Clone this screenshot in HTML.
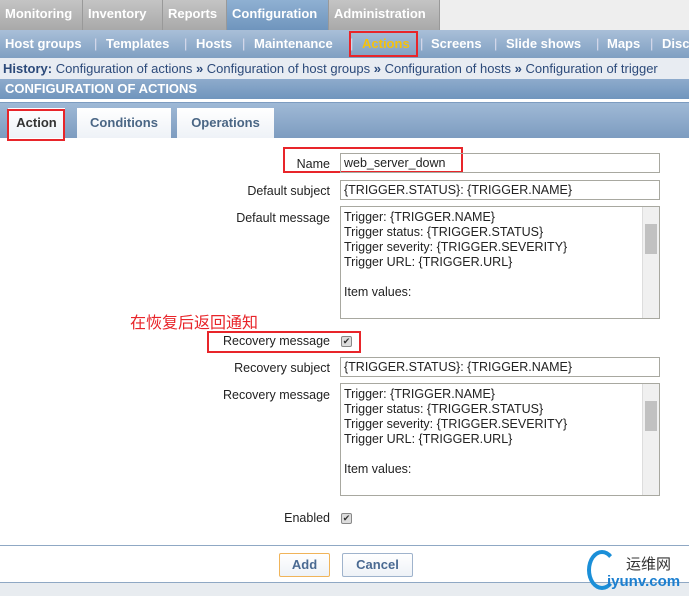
<!DOCTYPE html>
<html><head><meta charset="utf-8"><style>
*{box-sizing:border-box;margin:0;padding:0}
body{width:689px;height:596px;overflow:hidden;background:#fff;font-family:"Liberation Sans","DejaVu Sans",sans-serif;position:relative;font-size:12px;color:#222}
.a{position:absolute}
.top{left:0;top:0;width:689px;height:30px;background:#eee}
.tt{top:0;height:30px;background:linear-gradient(#c4c4c4,#a9a9a9);color:#fff;font-weight:bold;font-size:13px;line-height:28px;padding-left:5px;border-right:1px solid #999;white-space:nowrap}
.sub{left:0;top:30px;width:689px;height:28px;background:linear-gradient(#a9bfd8,#7f9fc2);overflow:hidden}
.si{top:0;color:#fff;font-weight:bold;font-size:13px;line-height:28px;white-space:nowrap}
.sp{top:0;color:#dde;font-size:13px;line-height:28px}
.hist{left:0;top:58px;width:689px;height:21px;background:#e8ecf2;line-height:21px;font-size:13px;color:#2c4a7a;white-space:nowrap;padding-left:3px;overflow:hidden}
.hdr{left:0;top:79px;width:689px;height:20px;background:linear-gradient(#8eabcc,#7095bd);color:#fff;font-weight:bold;font-size:13px;line-height:20px;padding-left:5px}
.tabs{left:0;top:102px;width:689px;height:36px;background:linear-gradient(#9fb9d6,#7d9cc0);border-top:1px solid #7d9cc0}
.tab{top:108px;height:30px;background:linear-gradient(#fff,#eef2f7);color:#4a6685;font-weight:bold;font-size:13px;line-height:30px;text-align:center}
.red{border:2px solid #e8252a}
.lbl{right:359px;font-size:12.5px;color:#222;text-align:right;white-space:nowrap}
.inp{left:340px;width:320px;height:20px;border:1px solid #a8a8a0;font-size:12.5px;line-height:18px;padding-left:3px}
.ta{left:340px;width:320px;height:113px;border:1px solid #a8a8a0;font-size:12.5px;line-height:15px;padding:3px 0 0 3px;overflow:hidden}
.sb{right:0;top:0;width:17px;height:100%;background:#f0f0f0;border-left:1px solid #ddd}
.cb{width:11px;height:11px;border:1px solid #888;background:#ddd;border-radius:2px;font-size:9px;line-height:9px;text-align:center;color:#333}
.btn{top:553px;height:24px;border:1px solid #9fb3cc;background:linear-gradient(#fff,#eef2f7);color:#4a6a92;font-weight:bold;font-size:13px;line-height:22px;text-align:center;border-radius:2px}
</style></head><body>
<div class="a top"></div>
<div class="a tt" style="left:0;width:83px">Monitoring</div>
<div class="a tt" style="left:83px;width:80px">Inventory</div>
<div class="a tt" style="left:163px;width:64px">Reports</div>
<div class="a tt" style="left:227px;width:102px;background:linear-gradient(#8fb0d2,#6f95bd)">Configuration</div>
<div class="a tt" style="left:329px;width:111px">Administration</div>
<div class="a sub">
<div class="a si" style="left:5px">Host groups</div><div class="a sp" style="left:94px">|</div>
<div class="a si" style="left:106px">Templates</div><div class="a sp" style="left:184px">|</div>
<div class="a si" style="left:196px">Hosts</div><div class="a sp" style="left:242px">|</div>
<div class="a si" style="left:254px">Maintenance</div><div class="a sp" style="left:350px">|</div>
<div class="a si" style="left:362px;color:#f4c20d">Actions</div><div class="a sp" style="left:420px">|</div>
<div class="a si" style="left:431px">Screens</div><div class="a sp" style="left:494px">|</div>
<div class="a si" style="left:506px">Slide shows</div><div class="a sp" style="left:596px">|</div>
<div class="a si" style="left:607px">Maps</div><div class="a sp" style="left:650px">|</div>
<div class="a si" style="left:662px">Disc</div>
</div>
<div class="a red" style="left:349px;top:31px;width:69px;height:26px"></div>
<div class="a hist"><b>History:</b> Configuration of actions <b>»</b> Configuration of host groups <b>»</b> Configuration of hosts <b>»</b> Configuration of trigger</div>
<div class="a hdr">CONFIGURATION OF ACTIONS</div>
<div class="a tabs"></div>
<div class="a tab" style="left:8px;width:57px;color:#333">Action</div>
<div class="a tab" style="left:77px;width:94px">Conditions</div>
<div class="a tab" style="left:177px;width:97px">Operations</div>
<div class="a red" style="left:7px;top:109px;width:58px;height:32px"></div>

<div class="a lbl" style="top:157px">Name</div>
<div class="a red" style="left:283px;top:147px;width:180px;height:26px"></div>
<div class="a inp" style="top:153px">web_server_down</div>
<div class="a lbl" style="top:184px">Default subject</div>
<div class="a inp" style="top:180px">{TRIGGER.STATUS}: {TRIGGER.NAME}</div>
<div class="a lbl" style="top:211px">Default message</div>
<div class="a ta" style="top:206px">Trigger: {TRIGGER.NAME}<br>Trigger status: {TRIGGER.STATUS}<br>Trigger severity: {TRIGGER.SEVERITY}<br>Trigger URL: {TRIGGER.URL}<br><br>Item values:<div class="a sb"><div class="a" style="left:2px;top:17px;width:12px;height:30px;background:#c1c1c1"></div></div></div>
<div class="a" style="left:130px;top:309px;font-size:16px;color:#e8252a;font-family:'Liberation Sans','Noto Sans CJK SC',sans-serif">在恢复后返回通知</div>
<div class="a lbl" style="top:334px">Recovery message</div>
<div class="a cb" style="left:341px;top:336px">✔</div>
<div class="a red" style="left:207px;top:331px;width:154px;height:22px"></div>
<div class="a lbl" style="top:361px">Recovery subject</div>
<div class="a inp" style="top:357px">{TRIGGER.STATUS}: {TRIGGER.NAME}</div>
<div class="a lbl" style="top:388px">Recovery message</div>
<div class="a ta" style="top:383px">Trigger: {TRIGGER.NAME}<br>Trigger status: {TRIGGER.STATUS}<br>Trigger severity: {TRIGGER.SEVERITY}<br>Trigger URL: {TRIGGER.URL}<br><br>Item values:<div class="a sb"><div class="a" style="left:2px;top:17px;width:12px;height:30px;background:#c1c1c1"></div></div></div>
<div class="a lbl" style="top:511px">Enabled</div>
<div class="a cb" style="left:341px;top:513px">✔</div>
<div class="a" style="left:0;top:545px;width:689px;height:1px;background:#8fa8c4"></div>
<div class="a btn" style="left:279px;width:51px;border-color:#f0b45a">Add</div>
<div class="a btn" style="left:342px;width:71px">Cancel</div>
<div class="a" style="left:0;top:582px;width:689px;height:14px;background:#e8ecf0;border-top:1px solid #8fa8c4"></div>
<div class="a" style="left:587px;top:550px;width:30px;height:40px;border:4px solid #1b8fd8;border-right-color:transparent;border-radius:50%"></div>
<div class="a" style="left:626px;top:553px;font-size:15px;color:#333;font-family:'Liberation Sans','Noto Sans CJK SC',sans-serif">运维网</div>
<div class="a" style="left:607px;top:573px;font-size:15px;font-weight:bold;color:#1b7fd0">iyunv.com</div>
</body></html>
